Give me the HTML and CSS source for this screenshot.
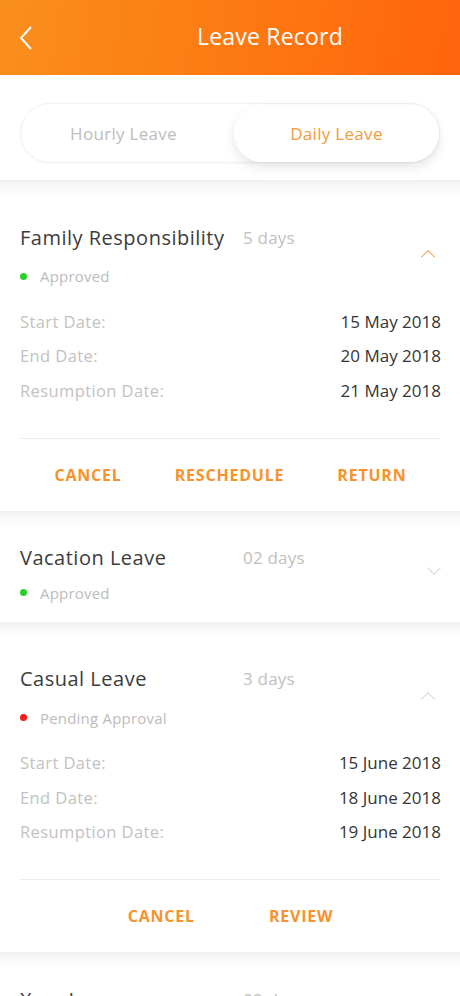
FILE: index.html
```html
<!DOCTYPE html>
<html lang="en">
<head>
    <meta charset="UTF-8">
    <meta name="viewport" content="width=device-width, initial-scale=1.0">
    <title>Leave Record</title>
    <link rel="stylesheet" href="styles.css">
</head>
<body>

    <!-- Header -->
    <div class="top-bar">
        <button class="back-button">
            <svg width="14" height="24" viewBox="0 0 14 24"><path d="M12 1 L2 12 L12 23" fill="none" stroke="white" stroke-width="2"/></svg>
        </button>
        <h1>Leave Record</h1>
    </div>

    <!-- Hourly / Daily switch -->
    <div class="switch-wrap">
        <div class="switch">
            <span class="switch-item">Hourly Leave</span>
            <span class="switch-item active">Daily Leave</span>
        </div>
    </div>

    <!-- Family Responsibility -->
    <div class="card open">
        <div class="card-head">
            <span class="leave-name">Family Responsibility</span>
            <span class="leave-days">5 days</span>
            <span class="chevron up orange"></span>
            <span class="status"><i class="dot green"></i>Approved</span>
        </div>
        <div class="dates">
            <div class="date-row"><span>Start Date:</span><span class="value">15 May 2018</span></div>
            <div class="date-row"><span>End Date:</span><span class="value">20 May 2018</span></div>
            <div class="date-row"><span>Resumption Date:</span><span class="value">21 May 2018</span></div>
        </div>
        <div class="actions">
            <a href="#" class="action">CANCEL</a>
            <a href="#" class="action">RESCHEDULE</a>
            <a href="#" class="action">RETURN</a>
        </div>
    </div>

    <!-- Vacation Leave -->
    <div class="card">
        <div class="card-head">
            <span class="leave-name">Vacation Leave</span>
            <span class="leave-days">02 days</span>
            <span class="chevron down"></span>
            <span class="status"><i class="dot green"></i>Approved</span>
        </div>
    </div>

    <!-- Casual Leave -->
    <div class="card open">
        <div class="card-head">
            <span class="leave-name">Casual Leave</span>
            <span class="leave-days">3 days</span>
            <span class="chevron up"></span>
            <span class="status"><i class="dot red"></i>Pending Approval</span>
        </div>
        <div class="dates">
            <div class="date-row"><span>Start Date:</span><span class="value">15 June 2018</span></div>
            <div class="date-row"><span>End Date:</span><span class="value">18 June 2018</span></div>
            <div class="date-row"><span>Resumption Date:</span><span class="value">19 June 2018</span></div>
        </div>
        <div class="actions center">
            <a href="#" class="action">CANCEL</a>
            <a href="#" class="action">REVIEW</a>
        </div>
    </div>

    <!-- Xray Leave -->
    <div class="card">
        <div class="card-head">
            <span class="leave-name">Xray Leave</span>
            <span class="leave-days">02 days</span>
            <span class="chevron down"></span>
            <span class="status"><i class="dot green"></i>Approved</span>
        </div>
    </div>

</body>
</html>
```

FILE: styles.css
```css
body {
    font-family: "Open Sans", "DejaVu Sans", sans-serif;
    margin: 0;
    padding: 0;
    background-color: white;
    color: #3a3a3a;
    overflow: hidden;
}

.top-bar {
    display: flex;
    align-items: center;
    height: 75px;
    background: linear-gradient(100deg, #f98f1c 0%, #fd7a12 50%, #ff640c 100%);
}

.back-button {
    width: 80px;
    height: 75px;
    display: flex;
    align-items: center;
    padding: 0 0 0 19px;
    background: none;
    border: none;
    cursor: pointer;
}

.top-bar h1 {
    flex: 1;
    margin: 0 0 4px 0;
    text-align: center;
    color: white;
    font-size: 23px;
    font-weight: normal;
    letter-spacing: 0.2px;
}

.switch-wrap {
    padding: 28px 20px 17px;
}

.switch {
    display: flex;
    height: 58px;
    border: 1px solid #f1f1f1;
    border-radius: 30px;
    box-shadow: 0 1px 3px rgba(0, 0, 0, 0.03);
}

.switch-item {
    flex: 1;
    display: flex;
    align-items: center;
    justify-content: center;
    font-size: 17px;
    letter-spacing: 0.3px;
    color: #bdbdbd;
    border-radius: 30px;
}

.switch-item.active {
    color: #f49a3e;
    background-color: white;
    margin: 1px 0 0 8px;
    box-shadow: 0 5px 12px rgba(0, 0, 0, 0.1);
}

.card {
    background: linear-gradient(#f0f0f0 0px, #f8f8f8 6px, white 16px);
    padding: 35px 19px 16px 20px;
}

.card.open {
    padding-top: 45px;
    padding-bottom: 0;
}

.card-head {
    display: grid;
    grid-template-columns: 223px 1fr 24px;
    grid-template-rows: 24px 26px;
    row-gap: 10px;
    align-items: center;
}

.card.open .card-head {
    row-gap: 14px;
}

.leave-name {
    font-size: 20px;
    letter-spacing: 0.5px;
    color: #3c3c3c;
    white-space: nowrap;
}

.leave-days {
    font-size: 17px;
    letter-spacing: 0.2px;
    color: #c0c0c0;
}

.chevron {
    grid-column: 3;
    grid-row: 1 / span 2;
    justify-self: center;
    width: 9px;
    height: 9px;
    border-left: 1.5px solid #d8d8d8;
    border-top: 1.5px solid #d8d8d8;
}

.chevron.up {
    transform: translate(-1px, 0) rotate(45deg);
}

.chevron.down {
    transform: translate(5px, -8px) rotate(225deg);
}

.chevron.orange {
    border-color: #f7a55a;
}

.status {
    grid-column: 1 / span 2;
    display: flex;
    align-items: center;
    font-size: 15px;
    letter-spacing: 0.2px;
    color: #bcbcbc;
}

.dot {
    width: 7px;
    height: 7px;
    border-radius: 50%;
    margin: 0 13px 0 0;
}

.dot.green {
    background-color: #2ad02a;
}

.dot.red {
    background-color: #f21c1c;
}

.dates {
    padding: 15px 0 30px;
    border-bottom: 1px solid #ececec;
}

.date-row {
    display: flex;
    justify-content: space-between;
    align-items: center;
    height: 34.5px;
    font-size: 16.5px;
    letter-spacing: 0.4px;
    color: #c2c2c2;
}

.date-row .value {
    font-size: 17px;
    letter-spacing: 0;
    color: #353535;
}

.actions {
    display: flex;
    justify-content: space-around;
    padding: 0 8px;
    height: 72px;
    align-items: center;
}

.actions.center {
    justify-content: center;
    gap: 74px;
}

.action {
    color: #f7922c;
    font-size: 16px;
    font-weight: bold;
    letter-spacing: 0.8px;
    text-decoration: none;
}
```
